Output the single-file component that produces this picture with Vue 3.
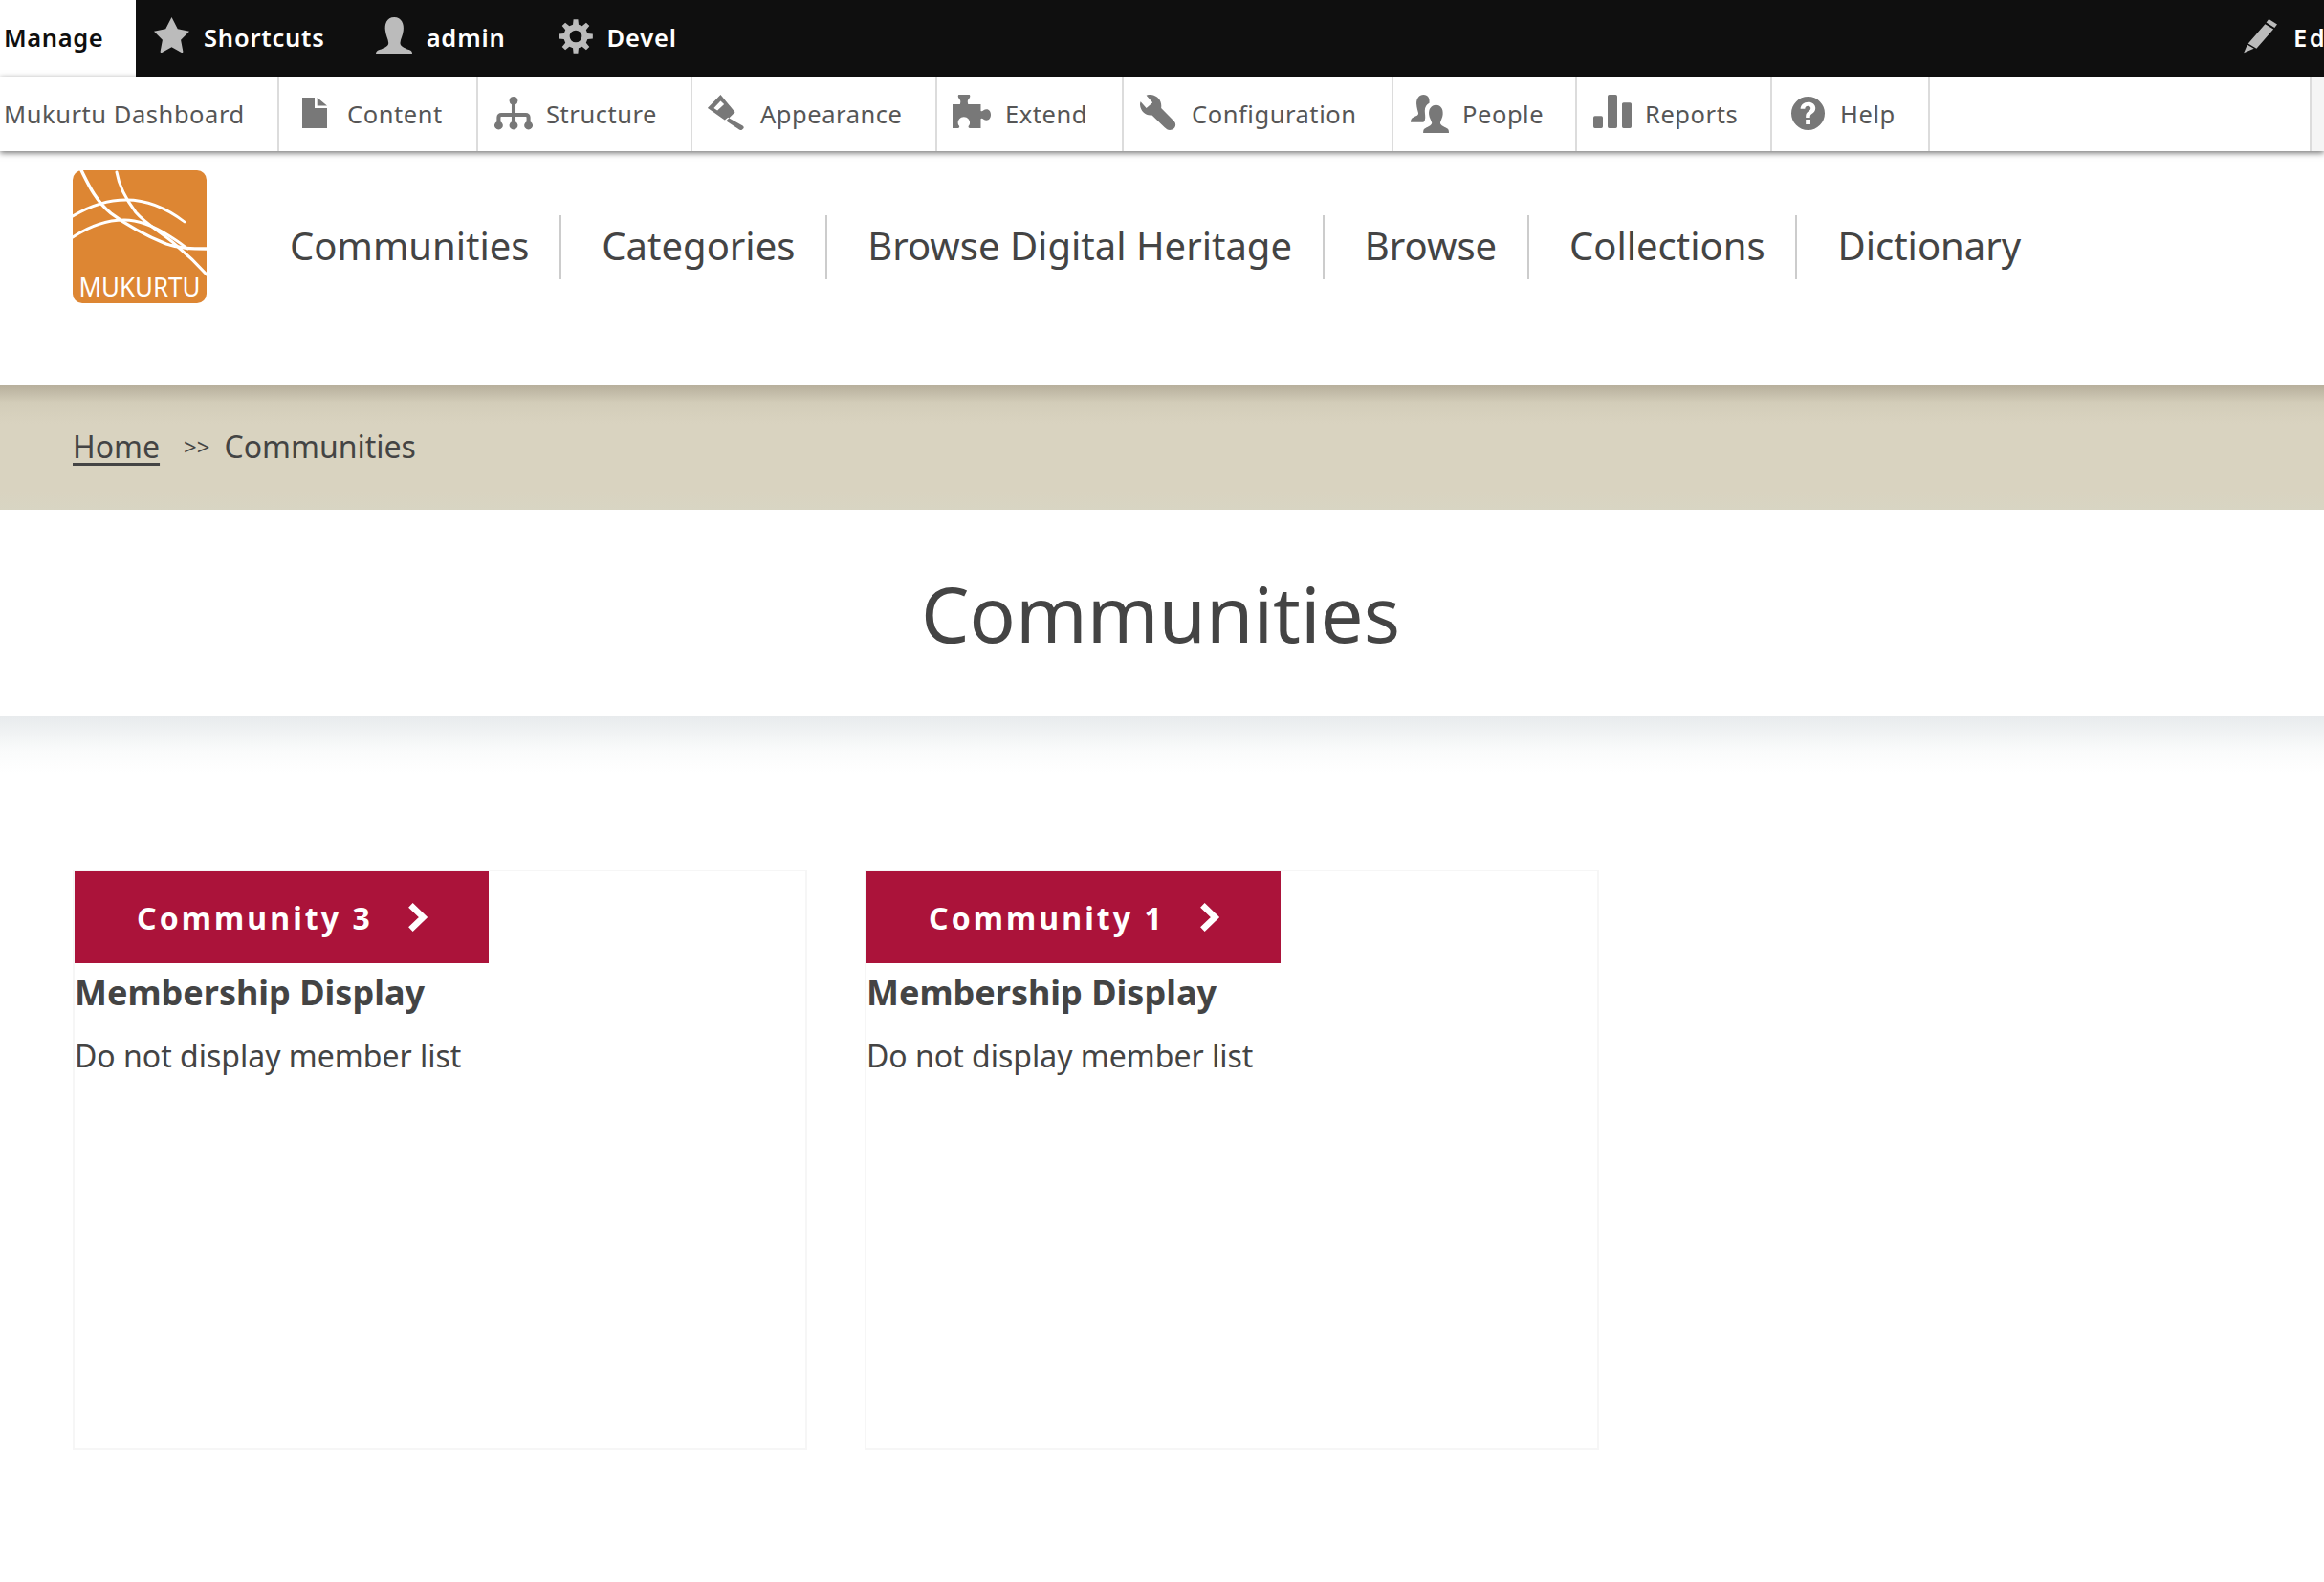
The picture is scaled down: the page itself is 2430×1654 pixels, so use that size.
<script setup>
function gearPath(cx, cy, outer, inner, hole) {
  const teeth = 8
  const pts = []
  for (let i = 0; i < teeth; i++) {
    const a = (i / teeth) * Math.PI * 2 - Math.PI / 2
    const s = (Math.PI * 2) / teeth
    const seq = [
      [inner, a - s * 0.3],
      [outer, a - s * 0.17],
      [outer, a + s * 0.17],
      [inner, a + s * 0.3]
    ]
    for (const [r, t] of seq) {
      pts.push((cx + r * Math.cos(t)).toFixed(1) + ' ' + (cy + r * Math.sin(t)).toFixed(1))
    }
  }
  return (
    'M' + pts.join('L') + 'z' +
    `M${cx - hole} ${cy}a${hole} ${hole} 0 1 0 ${hole * 2} 0a${hole} ${hole} 0 1 0 ${-hole * 2} 0z`
  )
}

const icons = {
  star: { vb: '30 22 112 111', d: 'M86 22l19 37 37 7-27 27 7 37c0 3-2 4-5 3l-31-17-31 17c-3 1-5 0-5-3l7-37-27-27 37-7z' },
  user: { vb: '728 20 115 113', d: 'M786 20C810 20 818 42 815 62C813 78 806 88 805 100C805 112 825 118 838 123C842 125 843 130 843 133H728C728 130 730 125 734 123C748 118 768 112 768 100C767 88 760 78 758 62C755 42 762 20 786 20z' },
  gear: { vb: '0 0 108 108', d: gearPath(54, 54, 54, 38, 19) },
  doc: { vb: '0 0 24 32', d: 'M0 0h12v11h12v21H0zM14.500 0L24 8.500H14.500z' },
  tree: { vb: '37 27 118 105', d: 'M96 27a13 13 0 0 1 6 24.500V78h32a14 14 0 0 1 14 14v13.800a13 13 0 1 1-12 0V92a2 2 0 0 0-2-2h-32v15.800a13 13 0 1 1-12 0V90H58a2 2 0 0 0-2 2v13.800a13 13 0 1 1-12 0V92a14 14 0 0 1 14-14h32V51.500A13 13 0 0 1 96 27z' },
  brush: { vb: '705 20 113 112', d: 'M745 20L790 75L762 103L705 62zM745 40L724 62L735 70L756 50zM768 92L814 118C819 122 818 126 813 130C809 134 804 132 800 128L758 100z' },
  puzzle: { vb: '37 20 118 105', d: 'M57 20H88C92 20 92 28 88 32C84 36 82 40 85 50H124V70C128 76 132 66 142 66C150 66 155 74 155 83C155 92 150 100 142 100C132 100 128 90 124 96V125H90C86 125 84 120 88 116C94 108 88 90 72 90C56 90 50 108 56 116C60 120 58 125 54 125H37V50H60C63 40 61 36 57 32C53 28 53 20 57 20z' },
  wrench: { vb: '620 20 115 112', d: 'M655 20C678 24 690 40 687 62L728 104C738 116 730 132 714 132C708 132 703 129 698 124L658 85C640 88 622 75 620 52C620 48 621 44 622 42L640 62L660 45L640 22C645 20 650 20 655 20z' },
  people: { vb: '28 20 119 120', d: 'M107 52C122 52 130 65 128 82C127 92 122 100 120 108C120 116 130 120 140 125C146 128 147 132 147 140H67C67 132 68 128 74 125C84 120 94 116 94 108C92 100 86 92 85 82C83 65 92 52 107 52zM68 20C82 20 88 32 86 46C78 50 72 58 72 70C72 80 75 90 72 100L68 106H28C28 98 30 94 36 91C44 87 52 86 52 78C50 70 47 62 46 48C46 32 54 20 68 20z' },
  bars: { vb: '600 20 120 107', d: 'M605 88h20a5 5 0 0 1 5 5v29a5 5 0 0 1-5 5h-20a5 5 0 0 1-5-5V93a5 5 0 0 1 5-5zM650 20h20a5 5 0 0 1 5 5v97a5 5 0 0 1-5 5h-20a5 5 0 0 1-5-5V25a5 5 0 0 1 5-5zM695 45h20a5 5 0 0 1 5 5v72a5 5 0 0 1-5 5h-20a5 5 0 0 1-5-5V50a5 5 0 0 1 5-5z' },
  help: { vb: '0 0 24 24', d: 'M12 0a12 12 0 1 0 0 24 12 12 0 0 0 0-24zM12.200 3.900c2.900 0 5.100 1.800 5.100 4.400 0 2-1.100 3-2.300 3.900-1.100.8-1.500 1.300-1.500 2.400v.5h-3.100v-.9c0-1.800.7-2.700 1.800-3.500 1-.8 1.700-1.300 1.700-2.400 0-1-.7-1.700-1.900-1.700-1.300 0-2.100.8-2.200 2.200H6.600c.1-2.900 2.300-4.900 5.600-4.900zM10.400 16.500h3.300v3.300h-3.300z' },
  pencil: { vb: '0 0 24 28', d: 'M18.200 0L24 4.200 22.200 7 16.400 2.800zM15.600 4l5.800 4.200L9.600 24 3.800 19.800zM3.200 20.800l4.600 3.200L.8 27.500z' }
}

const barLeft = [
  { label: 'Shortcuts', icon: 'star', w: 37, h: 37, ml: 19, mt: -5 },
  { label: 'admin', icon: 'user', w: 38, h: 38, ml: 53, mt: -5 },
  { label: 'Devel', icon: 'gear', w: 36, h: 36, ml: 55, mt: -2 }
]
const trayTabs = [
  { label: 'Content', icon: 'doc', w: 208, pl: 24, gap: 21, iw: 26, ih: 32, mt: -2 },
  { label: 'Structure', icon: 'tree', w: 224, pl: 17, gap: 14, iw: 40, ih: 35, mt: -1 },
  { label: 'Appearance', icon: 'brush', w: 256, pl: 16, gap: 17, iw: 38, ih: 37, mt: -3 },
  { label: 'Extend', icon: 'puzzle', w: 195, pl: 16, gap: 15, iw: 40, ih: 35, mt: -5 },
  { label: 'Configuration', icon: 'wrench', w: 282, pl: 17, gap: 16, iw: 38, ih: 37, mt: -3 },
  { label: 'People', icon: 'people', w: 192, pl: 18, gap: 14, iw: 40, ih: 40, mt: 0 },
  { label: 'Reports', icon: 'bars', w: 204, pl: 17, gap: 14, iw: 40, ih: 35, mt: -5 },
  { label: 'Help', icon: 'help', w: 165, pl: 20, gap: 16, iw: 35, ih: 35, mt: -1 }
]
const nav = ['Communities', 'Categories', 'Browse Digital Heritage', 'Browse', 'Collections', 'Dictionary']
const cards = ['Community 3', 'Community 1']
</script>

<template>
  <div class="page">
    <div class="bar">
      <div class="manage">Manage</div>
      <div
        v-for="item in barLeft"
        :key="item.label"
        class="bar-item"
        :style="{ marginLeft: item.ml + 'px' }"
      >
        <svg
          class="bar-icon"
          :style="{ width: item.w + 'px', height: item.h + 'px', marginTop: item.mt + 'px' }"
          :viewBox="icons[item.icon].vb"
          preserveAspectRatio="none"
        ><path :d="icons[item.icon].d" fill-rule="evenodd" /></svg>
        <span>{{ item.label }}</span>
      </div>
      <div class="bar-spacer"></div>
      <div class="bar-edit">
        <svg class="pencil" :viewBox="icons.pencil.vb" preserveAspectRatio="none"><path :d="icons.pencil.d" /></svg>
        <span>Edit</span>
      </div>
    </div>

    <div class="tray">
      <div class="tab tab-home">Mukurtu Dashboard</div>
      <div
        v-for="t in trayTabs"
        :key="t.label"
        class="tab"
        :style="{ width: t.w + 'px', paddingLeft: t.pl + 'px', gap: t.gap + 'px' }"
      >
        <svg
          class="tab-icon"
          :style="{ width: t.iw + 'px', height: t.ih + 'px', marginTop: t.mt + 'px' }"
          :viewBox="icons[t.icon].vb"
          preserveAspectRatio="none"
        ><path :d="icons[t.icon].d" fill-rule="evenodd" /></svg>
        <span>{{ t.label }}</span>
      </div>
      <div class="tab tab-fill"></div>
      <div class="tab-end"></div>
    </div>

    <header class="site">
      <svg class="logo" viewBox="0 0 140 139" aria-label="Mukurtu logo">
        <rect width="140" height="139" rx="10" fill="#dd8633" />
        <g fill="none" stroke="#fff" stroke-linecap="round">
          <path d="M9 0C16 14 24 32 40 45c16 12 38 24 58 32 14 5 28 5 42 5" stroke-width="3.400" />
          <path d="M46 2c2 12 8 26 20 42 12 14 32 24 44 36 12 10 22 20 30 29" stroke-width="3" />
          <path d="M0 48C20 36 38 31 56 31c22 0 44 10 61 23" stroke-width="2.800" />
          <path d="M0 70C18 58 36 52 54 52c14 0 30 6 46 16 8 5 14 9 20 14" stroke-width="2.800" />
        </g>
        <text
          x="70"
          y="132"
          text-anchor="middle"
          class="logo-text"
          textLength="127"
          lengthAdjust="spacingAndGlyphs"
        >MUKURTU</text>
      </svg>
      <nav class="menu">
        <a v-for="n in nav" :key="n" class="menu-item">{{ n }}</a>
      </nav>
    </header>

    <div class="crumbs">
      <a class="crumb-home">Home</a>
      <span class="crumb-sep">&gt;&gt;</span>
      <span>Communities</span>
    </div>

    <div class="title-band">
      <h1>Communities</h1>
    </div>

    <main class="cards">
      <article v-for="c in cards" :key="c" class="card">
        <a class="card-btn">
          <span>{{ c }}</span>
          <svg class="chev" viewBox="0 0 22 29"><path d="M4 3l12 11.500L4 26" fill="none" stroke="#fff" stroke-width="6" /></svg>
        </a>
        <h2>Membership Display</h2>
        <p>Do not display member list</p>
      </article>
    </main>
  </div>
</template>

<style>
html, body { margin: 0; background: #fff; overflow: hidden; }
</style>

<style scoped>
.page {
  width: 2430px;
  height: 1654px;
  overflow: hidden;
  background: #fff;
  font-family: "Noto Sans", "Open Sans", sans-serif;
  color: #444;
}
.bar {
  display: flex;
  align-items: stretch;
  height: 80px;
  background: #0f0f0f;
  color: #fff;
  font-size: 25.500px;
  font-weight: 600;
  letter-spacing: 0.8px;
}
.manage {
  width: 138px;
  padding-left: 4px;
  padding-bottom: 2px;
  background: #fff;
  color: #0f0f0f;
  letter-spacing: 0.6px;
  display: flex;
  align-items: center;
}
.bar-item { display: flex; align-items: center; gap: 15px; padding-bottom: 2px; }
.bar-icon { fill: #bbb; flex: none; }
.bar-spacer { flex: 1; }
.bar-edit {
  width: 85px;
  overflow: hidden;
  display: flex;
  align-items: center;
  gap: 17px;
  white-space: nowrap;
  padding-bottom: 2px;
  letter-spacing: 2.500px;
}
.pencil { width: 36px; height: 36px; flex: none; fill: #bbb; margin-top: -3px; }

.tray {
  display: flex;
  height: 78px;
  background: #fff;
  box-shadow: 0 2px 6px rgba(0, 0, 0, 0.55);
  position: relative;
  font-size: 25.500px;
  letter-spacing: 0.55px;
  color: #565656;
}
.tab {
  box-sizing: border-box;
  display: flex;
  align-items: center;
  border-right: 2px solid #dcdcdc;
  white-space: nowrap;
}
.tab-home { width: 292px; padding-left: 4px; }
.tab-fill { flex: 1; }
.tab-end { width: 13px; background: #f5f5f5; }
.tab-icon { flex: none; fill: #787878; }

.site {
  display: flex;
  height: 245px;
  padding-left: 76px;
  background: #fff;
}
.logo { width: 140px; height: 139px; margin-top: 20px; flex: none; }
.logo-text {
  font-family: "Noto Sans", sans-serif;
  font-weight: 400;
  font-size: 28px;
  fill: #fff;
}
.menu {
  display: flex;
  align-items: flex-start;
  margin-top: 67px;
  margin-left: 45px;
}
.menu-item {
  box-sizing: border-box;
  height: 67px;
  line-height: 64px;
  font-size: 40px;
  color: #444;
  padding: 0 31.800px 0 42px;
  border-right: 2px solid #ccc;
  white-space: nowrap;
}
.menu-item:last-child { border-right: 0; }

.crumbs {
  box-sizing: border-box;
  height: 130px;
  padding-left: 76px;
  padding-bottom: 3px;
  display: flex;
  align-items: center;
  font-size: 32px;
  color: #444;
  background: linear-gradient(#b7af9c 0, #d3cdb9 18px, #d9d3c0 40px, #d9d3c0 110px, #d8d5c3 100%);
}
.crumb-home {
  text-decoration: underline;
  text-decoration-thickness: 3px;
  text-underline-offset: 5px;
}
.crumb-sep { font-size: 24px; margin: 0 15px 0 25px; }

.title-band {
  height: 216px;
  display: flex;
  align-items: center;
  justify-content: center;
}
h1 {
  margin: -1px 3px 0 0;
  font-size: 80px;
  font-weight: 400;
  color: #444;
}
.cards {
  display: flex;
  gap: 60px;
  padding: 161px 0 0 76px;
  background: linear-gradient(#e8ebed 0, #fafbfb 36px, #fff 60px) no-repeat top / 100% 60px;
}
.card {
  box-sizing: border-box;
  width: 768px;
  height: 606px;
  border: 2px solid #f6f6f6;
  border-width: 1px 2px 2px 2px;
}
.card-btn {
  box-sizing: border-box;
  width: 433px;
  height: 96px;
  padding-left: 65px;
  display: flex;
  align-items: center;
  gap: 35px;
  background: #ab133a;
  color: #fff;
  font-size: 32px;
  font-weight: 700;
  letter-spacing: 3.100px;
}
.chev { width: 24px; height: 32px; }
h2 {
  margin: 7px 0 0;
  font-size: 36px;
  line-height: 48px;
  font-weight: 700;
  color: #444;
}
p {
  margin: 18px 0 0;
  font-size: 32px;
  line-height: 48px;
  color: #444;
}
</style>
